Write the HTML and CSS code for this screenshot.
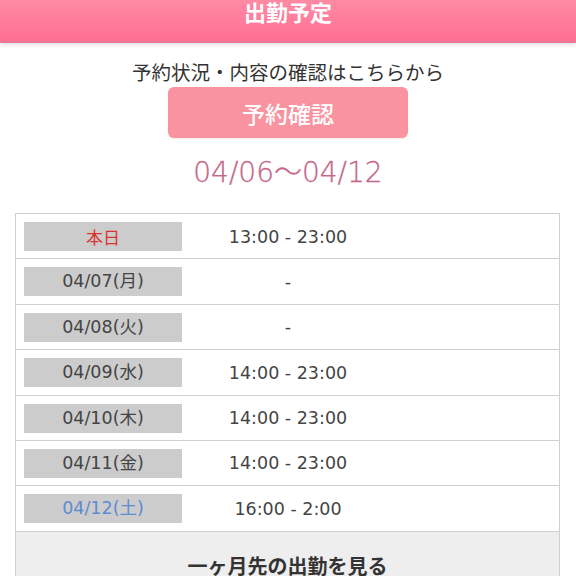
FILE: index.html
```html
<!DOCTYPE html>
<html lang="ja">
<head>
<meta charset="utf-8">
<link rel="stylesheet" href="styles.css">
</head>
<body>
<header class="head"><h1 class="head-title">出勤予定</h1></header>
<main class="main">
  <p class="lead">予約状況・内容の確認はこちらから</p>
  <a class="btn">予約確認</a>
  <p class="range">04/06〜04/12</p>
  <div class="sched">
    <div class="row"><span class="day today">本日</span><span class="time">13:00 - 23:00</span></div>
    <div class="row"><span class="day">04/07(月)</span><span class="time">-</span></div>
    <div class="row"><span class="day">04/08(火)</span><span class="time">-</span></div>
    <div class="row"><span class="day">04/09(水)</span><span class="time">14:00 - 23:00</span></div>
    <div class="row"><span class="day">04/10(木)</span><span class="time">14:00 - 23:00</span></div>
    <div class="row"><span class="day">04/11(金)</span><span class="time">14:00 - 23:00</span></div>
    <div class="row"><span class="day sat">04/12(土)</span><span class="time">16:00 - 2:00</span></div>
    <div class="more">一ヶ月先の出勤を見る</div>
  </div>
</main>
</body>
</html>
```
FILE: styles.css
```css
* { box-sizing: border-box; }
html, body { margin: 0; padding: 0; background: #fff; }
body {
  font-family: "Noto Sans CJK JP", "Noto Sans", sans-serif;
  color: #333;
  overflow: hidden;
}
.head {
  height: 43px;
  background: linear-gradient(#ff8aa3, #ff6f93);
  border-bottom: 2px solid #e8789a;
  box-shadow: 0 2px 4px rgba(0,0,0,0.12);
  display: flex;
  justify-content: center;
  align-items: flex-start;
}
.head-title {
  margin: -5px 0 0;
  font-size: 22px;
  line-height: 32px;
  font-weight: 700;
  color: #fff;
}
.main {
  display: flex;
  flex-direction: column;
  align-items: center;
}
.lead {
  margin: 15px 0 0;
  font-size: 19.5px;
  line-height: 28px;
  font-weight: 400;
  color: #333;
}
.btn {
  margin-top: 1px;
  width: 240px;
  height: 51px;
  border-radius: 6px;
  background: #f9939f;
  color: #fff;
  font-size: 23px;
  font-weight: 500;
  display: flex;
  align-items: center;
  justify-content: center;
  box-shadow: 0 1px 2px rgba(0,0,0,0.08);
}
.range {
  margin: 14px 0 0;
  font-family: "DejaVu Sans", "Noto Sans CJK JP", sans-serif;
  font-size: 28px;
  line-height: 42px;
  font-weight: 200;
  color: #c4668a;
  -webkit-text-stroke: 0.3px #c4668a;
}
.sched {
  margin-top: 19px;
  align-self: stretch;
  margin-left: 15px;
  margin-right: 16px;
  border: 1px solid #cfcfcf;
  border-bottom: none;
}
.row {
  display: flex;
  align-items: center;
  padding: 8px 8px 7.4px;
  border-bottom: 1px solid #cfcfcf;
}
.day {
  width: 158px;
  height: 29px;
  background: #cccccc;
  font-family: "DejaVu Sans", "Noto Sans CJK JP", sans-serif;
  font-size: 17.5px;
  font-weight: 400;
  line-height: 29px;
  text-align: center;
  color: #444;
}
.day.today { color: #d9342f; font-family: "Noto Sans CJK JP", sans-serif; font-size: 17px; }
.day.sat { color: #5e8bd0; }
.time {
  width: 212px;
  text-align: center;
  font-family: "DejaVu Sans", "Noto Sans CJK JP", sans-serif;
  font-size: 17.5px;
  font-weight: 400;
  color: #444;
}
.more {
  background: #eeeeee;
  height: 68px;
  display: flex;
  align-items: center;
  justify-content: center;
  font-size: 20px;
  font-weight: 700;
  color: #333;
}
```
